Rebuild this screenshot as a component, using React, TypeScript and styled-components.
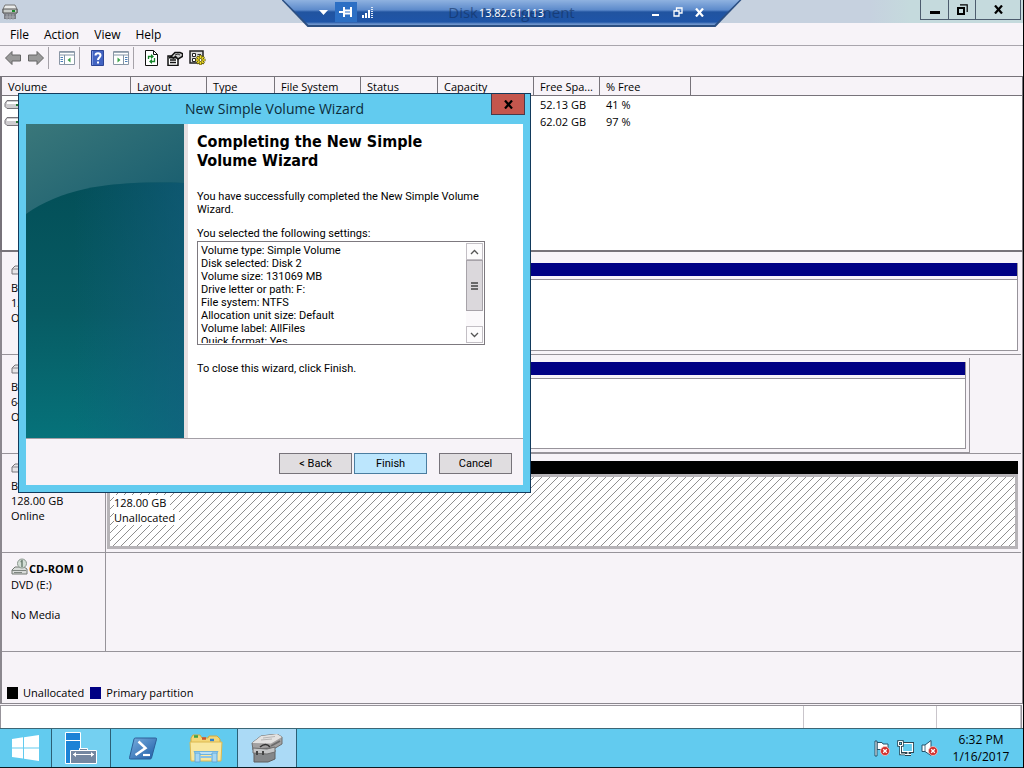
import React from "react";
import styled, { createGlobalStyle, css } from "styled-components";

const UI = '"Open Sans", "Noto Sans", sans-serif';
const DLG = 'Roboto, "Liberation Sans", Arial, sans-serif';

const Global = createGlobalStyle`
  * { box-sizing: border-box; }
  body { margin: 0; background: #f7f3f8; font-family: ${UI}; font-size: 12px; color: #000; }
  button, textarea { font: inherit; color: inherit; }
  svg { display: block; flex: none; }
`;

const Screen = styled.div`
  position: relative;
  display: flex;
  flex-direction: column;
  min-height: 100vh;
  border-right: 1px solid #000;
  overflow: hidden;
`;

/* ---------- window chrome ---------- */
const TitleBar = styled.header`
  position: relative;
  display: flex;
  align-items: flex-start;
  justify-content: space-between;
  height: 23px;
  padding: 0 2px;
  background: linear-gradient(90deg, #c6d1df 0 85%, #c5dadd 89%);
`;
const AppIcon = styled.div`
  padding-top: 4px;
`;
const WindowButtons = styled.div`
  display: flex;
`;
const WindowButton = styled.button<{ $w: number }>`
  display: flex;
  align-items: center;
  justify-content: center;
  width: ${(p) => p.$w}px;
  height: 20px;
  padding: 0;
  border: 1px solid #4d5c6e;
  border-width: 0 0 1px 1px;
  background: #c5dadd;
  &:last-child { border-right-width: 1px; }
`;
const RemoteBar = styled.div`
  position: absolute;
  top: 0;
  left: 50%;
  width: 460px;
  height: 27px;
  transform: translateX(-50%);
  clip-path: polygon(0 0, 100% 0, 434px 100%, 26px 100%);
  background: #2c4f82;
`;
const RemoteBarFace = styled.div`
  display: flex;
  align-items: center;
  height: 25px;
  padding: 0 31px 1px;
  clip-path: polygon(2px 0, 458px 0, 433px 100%, 27px 100%);
  background: linear-gradient(#8fb2e0, #5c8acb 10px, #2154a0 12px, #1f55a8 22px, #6d93cb 24px);
  color: #fff;
`;
const AppTitle = styled.h1`
  position: absolute;
  inset: 0;
  margin: 0;
  font-size: 15px;
  font-weight: 400;
  line-height: 24px;
  text-align: center;
  color: #12305f;
  opacity: 0.6;
`;
const RemoteAddress = styled.span`
  position: relative;
  flex: 1;
  font-size: 11px;
  text-align: center;
`;
const RemoteButton = styled.button<{ $on?: boolean }>`
  position: relative;
  display: flex;
  align-items: center;
  justify-content: center;
  width: 22px;
  height: 20px;
  padding: 0;
  border: 0;
  background: ${(p) => (p.$on ? "#2c6fc4" : "transparent")};
`;

const MenuBar = styled.nav`
  display: flex;
  gap: 15px;
  height: 23px;
  padding: 0 10px;
  border-bottom: 1px solid #a9a5ad;
`;
const MenuItem = styled.button`
  padding: 0;
  border: 0;
  background: none;
  line-height: 21px;
`;
const ToolBar = styled.div`
  display: flex;
  align-items: center;
  height: 30px;
  padding: 0 1px 6px;
`;
const ToolButton = styled.button`
  display: flex;
  align-items: center;
  justify-content: center;
  width: 23px;
  height: 22px;
  padding: 0;
  border: 0;
  background: none;
`;
const Separator = styled.span`
  width: 1px;
  height: 22px;
  margin: 0 6px 0 1px;
  background: #a6a2a9;
`;

/* ---------- volume list ---------- */
const VolumePane = styled.section`
  height: 176px;
  border: 1px solid #77737a;
  border-left-width: 2px;
  border-bottom: 2px solid #77737a;
  background: #fff;
  font-size: 11px;
`;
const VolumeTable = styled.table`
  width: 100%;
  border-collapse: separate;
  border-spacing: 0;
  table-layout: fixed;
  th {
    height: 19px;
    padding: 2px 0 0 6px;
    border-right: 1px solid #77737a;
    border-bottom: 1px solid #77737a;
    background: #f7f3f8;
    font-size: 11px;
    font-weight: 400;
    line-height: 16px;
    text-align: left;
    white-space: nowrap;
  }
  th:last-child { border-right: 0; }
  td {
    height: 17px;
    padding: 0 0 0 6px;
    line-height: 17px;
    white-space: nowrap;
  }
  td:first-child { padding-left: 2px; }
`;

/* ---------- disk map ---------- */
const DiskPane = styled.main`
  flex: 1;
  display: flex;
  flex-direction: column;
  border: 1px solid #8b878e;
  border-width: 0 1px 1px 2px;
`;
const DiskList = styled.div`
  flex: 1;
  padding-top: 4px;
`;
const DiskRow = styled.div`
  display: flex;
  height: 99px;
  margin-right: 1px;
`;
const DiskInfo = styled.div`
  display: flex;
  flex-direction: column;
  width: 104px;
  padding: 8px 0 0 9px;
  border-right: 1px solid #97939a;
  border-bottom: 1px solid #97939a;
  font-size: 11px;
  line-height: 15px;
  white-space: pre;
`;
const DiskName = styled.strong`
  display: flex;
  align-items: flex-start;
  height: 16px;
  svg { margin: -3px 1px 0 0; }
`;
const DiskMap = styled.div`
  flex: 1;
  display: flex;
  padding: 3px 3px 0 0;
  border-bottom: 1px solid #97939a;
`;
const Partition = styled.div<{ $framed?: boolean }>`
  flex: 1;
  display: flex;
  padding: 4px 0 3px 1px;
  ${(p) =>
    p.$framed &&
    css`
      flex: none;
      width: calc(100% - 48px);
      padding-right: 3px;
      border-right: 1px solid #97939a;
      border-bottom: 1px solid #97939a;
    `}
`;
const PartitionBox = styled.div<{ $plain?: boolean }>`
  flex: 1;
  display: flex;
  flex-direction: column;
  border: 0 solid #97939a;
  border-width: ${(p) => (p.$plain ? "0" : "0 1px 1px 0")};
`;
const PartitionColor = styled.div<{ $c: string }>`
  height: 13px;
  background: ${(p) => p.$c};
`;
const PartitionBody = styled.div`
  flex: 1;
  margin-top: 3px;
  border: 1px solid #97939a;
  border-width: 1px 0 0 1px;
  background: #fff;
`;

const hatchCells = Array.from({ length: 8 }, (_, i) => `M${7 - i} ${i}h1v1h-1z`).join("");
const hatch = `url("data:image/svg+xml,${encodeURIComponent(
  `<svg xmlns="http://www.w3.org/2000/svg" width="8" height="8" shape-rendering="crispEdges"><path fill="#8f8f8f" d="${hatchCells}"/></svg>`
)}")`;

const FreeSpace = styled.div`
  flex: 1;
  display: flex;
  flex-direction: column;
  align-items: flex-start;
  padding: 18px 0 0 4px;
  border: 3px solid #b7b4b8;
  background: #fff ${hatch};
  font-size: 11px;
  line-height: 15px;
  span { padding: 0 4px 0 0; background: #fff; }
`;
const Legend = styled.div`
  display: flex;
  align-items: center;
  gap: 6px;
  height: 21px;
  padding: 0 5px;
  font-size: 11px;
`;
const LegendItem = styled.span`
  display: flex;
  align-items: center;
  gap: 5px;
`;
const Swatch = styled.span<{ $c: string }>`
  width: 11px;
  height: 12px;
  background: ${(p) => p.$c};
`;
const StatusBar = styled.footer`
  display: flex;
  height: 23px;
  margin: 1px 1px 0 0;
  border: 1px solid #97939a;
  border-bottom: 0;
  background: #fff;
`;
const StatusCell = styled.span<{ $w?: number }>`
  flex: ${(p) => (p.$w ? "none" : 1)};
  width: ${(p) => p.$w ?? 0}px;
  border-right: 1px solid #c9c5cb;
`;

/* ---------- taskbar ---------- */
const TaskBar = styled.footer`
  display: flex;
  align-items: stretch;
  height: 40px;
  border-top: 1px solid #3d6675;
  border-bottom: 1px solid #0b1a20;
  background: #62cbef;
`;
const TaskButton = styled.button<{ $w: number; $tone?: string }>`
  display: flex;
  align-items: center;
  justify-content: center;
  width: ${(p) => p.$w}px;
  padding: 0;
  border: 0;
  background: ${(p) => p.$tone ?? "transparent"};
  ${(p) => p.$tone && css`border-right: 1px solid #2b6076; border-left: 1px solid #2b6076;`}
`;
const Tray = styled.div`
  display: flex;
  align-items: center;
  gap: 6px;
  margin-left: auto;
`;
const Clock = styled.time`
  width: 78px;
  padding-right: 6px;
  font-size: 12px;
  line-height: 17px;
  text-align: center;
  white-space: pre-line;
`;

/* ---------- wizard ---------- */
const Dialog = styled.section`
  position: absolute;
  top: 93px;
  left: 18px;
  width: 513px;
  padding: 0 7px 7px;
  border: 1px solid #123a5c;
  background: #62cbef;
  font-family: ${DLG};
  font-size: 11px;
  line-height: 13px;
`;
const DialogTitle = styled.header`
  position: relative;
  height: 30px;
  font-family: ${UI};
  font-size: 14px;
  line-height: 29px;
  text-align: center;
  color: #0d2b3a;
`;
const DialogClose = styled.button`
  position: absolute;
  top: 0;
  right: -2px;
  display: flex;
  align-items: center;
  justify-content: center;
  width: 34px;
  height: 21px;
  padding: 0;
  border: 1px solid #4a3a4a;
  border-top: 0;
  background: #c4564d;
`;
const DialogBody = styled.div`
  display: flex;
  height: 315px;
  border-bottom: 1px solid #a39fa6;
  background: #fff;
`;
const Banner = styled.div`
  width: 162px;
  border-right: 4px solid #e6e0e1;
`;
const Page = styled.div`
  flex: 1;
  padding: 8px 38px 0 9px;
`;
const Heading = styled.h2`
  margin: 0 0 20px;
  font-family: "DejaVu Sans Condensed", "DejaVu Sans", sans-serif;
  font-size: 16px;
  font-weight: 700;
  line-height: 19px;
  color: #000;
`;
const Text = styled.p<{ $gap?: number }>`
  margin: 0 0 ${(p) => p.$gap ?? 0}px;
`;
const SettingsLabel = styled.label`
  display: block;
  margin-bottom: 1px;
`;
const SettingsBox = styled.div`
  display: flex;
  height: 104px;
  margin-bottom: 17px;
  padding: 1px;
  border: 1px solid #7d797f;
`;
const Settings = styled.textarea`
  flex: 1;
  height: 100px;
  min-width: 0;
  margin: 0;
  padding: 1px 2px;
  border: 0;
  outline: 0;
  background: #fff;
  line-height: 13px;
  resize: none;
  overflow: hidden;
`;
const ScrollBar = styled.div`
  display: flex;
  flex-direction: column;
  width: 17px;
  background: #fbf9fb;
`;
const ScrollArrow = styled.button`
  display: flex;
  align-items: center;
  justify-content: center;
  height: 17px;
  padding: 0;
  border: 1px solid #c3bfc5;
  background: #fdfcfd;
`;
const Thumb = styled.div`
  display: flex;
  align-items: center;
  justify-content: center;
  height: 51px;
  margin-bottom: auto;
  border: 1px solid #a7a3a9;
  background: #dbd8dc;
`;
const Actions = styled.div`
  display: flex;
  justify-content: flex-end;
  gap: 2px;
  height: 46px;
  padding: 14px 11px 0 0;
  background: #f7f3f8;
`;
const PushButton = styled.button<{ $primary?: boolean; $apart?: boolean }>`
  width: 73px;
  height: 21px;
  margin-left: ${(p) => (p.$apart ? 10 : 0)}px;
  padding: 0;
  border: 1px solid ${(p) => (p.$primary ? "#4b7da0" : "#77737a")};
  background: ${(p) => (p.$primary ? "#bce6fd" : "#e0dde0")};
  font-size: 11px;
`;

/* ---------- drawings ---------- */
const SmallDisk = () => (
  <svg width="16" height="17" viewBox="0 0 16 17">
    <path d="M3 1h10l2 4v4H1V5z" fill="#e9ebea" stroke="#777" />
    <path d="M1 5h14v4H1z" fill="#c9cdca" stroke="#555" />
    <path d="M10 7h3" stroke="#1d8b2e" strokeWidth="2" />
    <path d="M2 10h12v5H2z" fill="#7c7f86" />
    <path d="M3 13h10M5 10v6M8 10v6M11 10v6" stroke="#a9acb2" />
  </svg>
);
const VolumeIcon = () => (
  <svg width="18" height="9" viewBox="0 0 18 9">
    <path d="M3 .5h12l2 3v3l-2 2H3l-2-2v-3z" fill="#cfcdd0" stroke="#77747a" />
    <path d="M3 3h11" stroke="#fff" strokeWidth="2" />
    <path d="M12 5h3" stroke="#297a35" strokeWidth="2" />
  </svg>
);
const DiskIcon = () => (
  <svg width="17" height="16" viewBox="0 0 17 16">
    <path d="M1 8l3-3h10l2 3v5H1z" fill="#e6e4e7" stroke="#77747a" />
    <path d="M1 8h15" stroke="#8a878d" />
  </svg>
);
const CdIcon = () => (
  <svg width="17" height="17" viewBox="0 0 17 17">
    <path d="M1 12l3-3h9l3 2v5H1z" fill="#d9dcda" stroke="#727873" />
    <circle cx="11" cy="5.500" r="4.500" fill="#d3ded6" stroke="#8a968e" />
    <path d="M11 2v7M9.500 3.500H11" stroke="#6d8073" strokeWidth="1.500" fill="none" />
    <path d="M1 12.500h14M3 14.500h8" stroke="#7e8580" />
  </svg>
);
const Arrow = ({ flip }: { flip?: boolean }) => (
  <svg width="18" height="16" viewBox="0 0 18 16">
    <path
      d="M1.500 8L8 1.500V5h8.500v6H8v3.500z"
      fill="#999"
      stroke="#666"
      transform={flip ? "matrix(-1 0 0 1 18 0)" : undefined}
    />
  </svg>
);
const PaneIcon = ({ right }: { right?: boolean }) => (
  <svg width="16" height="14" viewBox="0 0 16 14">
    <path d="M.5.5h15v13H.5z" fill="#fff" stroke="#8a96a5" />
    <path d="M1 1.500h14" stroke="#9eabb9" />
    <path d="M1 4h14" stroke="#8293a6" />
    {right ? (
      <>
        <path d="M10.500 4v9" stroke="#8293a6" />
        <path d="M12 6.500h2.500M12 8.500h2.500M12 10.500h2.500" stroke="#4b7fb8" />
        <path d="M4.500 6.500l3 2.500-3 2.500z" fill="#3ca349" />
      </>
    ) : (
      <>
        <path d="M5.500 4v9" stroke="#8293a6" />
        <path d="M1.500 6.500H4M1.500 8.500H4M1.500 10.500H4" stroke="#4b7fb8" />
        <path d="M11.500 6.500l-3 2.500 3 2.500z" fill="#3ca349" />
      </>
    )}
  </svg>
);
const HelpIcon = () => (
  <svg width="13" height="16" viewBox="0 0 13 16">
    <path d="M.5.5h12v15H.5z" fill="#4263c2" stroke="#2c4596" />
    <path d="M1.500 1v14" stroke="#7e98e0" />
    <path d="M4.500 5.500C4.500 2.500 9.500 2.500 9.500 5.500 9.500 7.500 7 7.500 7 10M7 11.500v2" fill="none" stroke="#fff" strokeWidth="2" />
  </svg>
);
const RefreshIcon = () => (
  <svg width="13" height="16" viewBox="0 0 13 16">
    <path d="M.5.5h8l4 4v11H.5z" fill="#fff" stroke="#111" />
    <path d="M8.500.5v4h4" fill="none" stroke="#111" />
    <path d="M3.500 9V6.500H7M9.500 8v3.500H6" fill="none" stroke="#16862a" strokeWidth="1.300" />
    <path d="M6 4l3 2.500L6 9zM7 9l-3 2.500L7 14z" fill="#16862a" />
  </svg>
);
const PropertiesIcon = () => (
  <svg width="16" height="15" viewBox="0 0 16 15">
    <path d="M1 5h10v9.500H1z" fill="#fff" stroke="#111" strokeWidth="1.500" />
    <path d="M3 9h6M3 11.500h6" stroke="#111" strokeWidth="1.500" />
    <path d="M2 6.500h8" stroke="#111" strokeWidth="2" />
    <path d="M4 5.500L8 1.500h5l2.500 1v3L11 8 8.500 5.500l-2 1.500z" fill="#ccc" stroke="#111" strokeWidth="1.500" />
    <path d="M8 4l3-1 2 1" fill="none" stroke="#333" />
  </svg>
);
const SettingsIcon = () => (
  <svg width="17" height="16" viewBox="0 0 17 16">
    <path d="M1 1h13v12H1z" fill="#ddd" stroke="#222" strokeWidth="1.500" />
    <path d="M3.500 3.500h3v3h-3zM3.500 8.500h3v3h-3z" fill="#fff" stroke="#222" />
    <path d="M8.500 4.500H12M8.500 7H12" stroke="#333" />
    <path d="M11.500 5v10M6.500 10h10M8 6.500l7 7M15 6.500l-7 7" stroke="#5b5200" strokeWidth="2.500" />
    <path d="M11.500 5.500v9M7 10h9M8.500 7l6 6M14.500 7l-6 6" stroke="#f0dd2a" strokeWidth="1.500" />
    <circle cx="11.500" cy="10" r="1.500" fill="#fff" stroke="#5b5200" />
  </svg>
);
const MinGlyph = () => (
  <svg width="12" height="10" viewBox="0 0 12 10">
    <path d="M1 7.500h10" stroke="#000" strokeWidth="3" />
  </svg>
);
const MinSmall = () => (
  <svg width="8" height="8" viewBox="0 0 8 8">
    <path d="M0 7h7" stroke="#fff" strokeWidth="2" />
  </svg>
);
const RestoreGlyph = () => (
  <svg width="11" height="11" viewBox="0 0 11 11">
    <path d="M1 4h6v6H1z" fill="none" stroke="#000" strokeWidth="2" />
    <path d="M3 .8h7.200V8" fill="none" stroke="#000" strokeWidth="1.200" />
  </svg>
);
const CloseGlyph = ({ c = "#000", s = 9 }: { c?: string; s?: number }) => (
  <svg width={s} height={s} viewBox="0 0 9 9">
    <path d="M1 .5l7 8M8 .5l-7 8" stroke={c} strokeWidth="2.200" />
  </svg>
);
const Chevron = ({ down }: { down?: boolean }) => (
  <svg width="9" height="6" viewBox="0 0 9 6">
    <path d={down ? "M1 1l3.500 3.500L8 1" : "M1 5l3.500-3.500L8 5"} fill="none" stroke="#555" strokeWidth="1.300" />
  </svg>
);
const WindowsLogo = () => (
  <svg width="28" height="26" viewBox="0 0 28 26">
    <path d="M0 4l11-1.700V12.500H0zM12 2.200L27 0v12.500H12zM0 13.500h11v10L0 22zM12 13.500h15V26l-15-2.300z" fill="#fff" />
  </svg>
);
const ServerManager = () => (
  <svg width="32" height="32" viewBox="0 0 32 32">
    <path d="M.5.5h15v31H.5z" fill="#1c82d6" stroke="#fff" />
    <path d="M0 8.500h16" stroke="#fff" />
    <path d="M14.500 18.500v-2h8v2" fill="#7487a1" stroke="#fff" />
    <path d="M5.500 18.500h26v13h-26z" fill="#7487a1" stroke="#fff" />
    <path d="M8 22.500h21" stroke="#fff" />
    <path d="M11 20l-3 2.500 3 2.500zM26 20l3 2.500-3 2.500z" fill="#fff" />
  </svg>
);
const PowerShell = () => (
  <svg width="28" height="23" viewBox="0 0 28 23">
    <defs>
      <linearGradient id="ps" x1="0" y1="0" x2="1" y2="1">
        <stop offset="0" stopColor="#79aede" />
        <stop offset="1" stopColor="#1d5ca6" />
      </linearGradient>
    </defs>
    <path d="M6.500 1h20a1 1 0 0 1 1 1.300l-5 18.700a1.500 1.500 0 0 1-1.500 1H1.500a1 1 0 0 1-1-1.300L5 2A1.500 1.500 0 0 1 6.500 1z" fill="url(#ps)" stroke="#2d5f98" />
    <path d="M9.500 4.500l7 6.500-10 7" fill="none" stroke="#fff" strokeWidth="2.500" />
    <path d="M14 18h7" stroke="#fff" strokeWidth="2.200" />
  </svg>
);
const Explorer = () => (
  <svg width="34" height="29" viewBox="0 0 34 29">
    <path d="M2 4l2-3h7l2 3h6l1-2h8l3 3v21H2z" fill="#f3d778" stroke="#d1aa3e" />
    <path d="M5 2.500h4" stroke="#3da046" strokeWidth="2.500" />
    <path d="M13 4.500h4" stroke="#c9532f" strokeWidth="2.500" />
    <path d="M21 6h4" stroke="#2f83cf" strokeWidth="2.500" />
    <path d="M1 8h32l-1 19H2z" fill="#f9e79f" stroke="#dcb951" />
    <path d="M5 17.500h24l-2 3H7z" fill="#b9e0f5" stroke="#6fb2dc" />
    <path d="M6 19h5v9H6zM23 19h5v9h-5z" fill="#a5d6f3" stroke="#5fa9da" />
    <path d="M11 23h12" stroke="#8cc4e6" strokeWidth="2" />
  </svg>
);
const DiskMgmt = () => (
  <svg width="32" height="29" viewBox="0 0 32 29">
    <path d="M1 9L10 2l16-2 5 3v7l-10 6H2z" fill="#a3a1a1" stroke="#6e6e6e" />
    <path d="M1 9L10 2l16-2 5 3-11 6.500z" fill="#e3e2e1" />
    <path d="M12 4l12-1.500M10 6l11-1" stroke="#b5b5b5" />
    <path d="M20 12l9-5" stroke="#6c6c6c" strokeWidth="2" />
    <path d="M9 13q6-5 10 0" fill="none" stroke="#333" strokeWidth="1.500" />
    <path d="M3 15l17-1 4 2v9l-7 3H3z" fill="#858789" stroke="#5f5f5f" />
    <path d="M2 14l14 1 8-2v5l-8 2-14-1z" fill="#c4c5c6" stroke="#6e6e6e" />
    <path d="M6 17v4M12 17v4" stroke="#444" strokeWidth="2" />
  </svg>
);
const ErrorDot = () => (
  <>
    <circle cx="12" cy="11" r="4.500" fill="#d2302c" stroke="#f2c9c7" strokeWidth=".8" />
    <path d="M10.200 9.200l3.600 3.600M13.800 9.200l-3.600 3.600" stroke="#fff" strokeWidth="1.300" />
  </>
);
const FlagIcon = () => (
  <svg width="18" height="17" viewBox="0 0 18 17">
    <path d="M4 2.500h5l1 1.500h5v7h-5L9 9.500H4z" fill="#fff" stroke="#27536a" />
    <path d="M2 1h2v15H2z" fill="#fff" stroke="#27536a" />
    <ErrorDot />
  </svg>
);
const NetworkIcon = () => (
  <svg width="18" height="17" viewBox="0 0 18 17">
    <path d="M5.500 3.500h10v8h-10zM8 14.500h6M11 12v2" fill="none" stroke="#2d4450" strokeWidth="3" />
    <path d="M5.500 3.500h10v8h-10zM8 14.500h6M11 12v2" fill="#62cbef" stroke="#fff" strokeWidth="1.200" />
    <path d="M1.500 1.500h4v4h-4zM3.500 6v8H8" fill="none" stroke="#2d4450" strokeWidth="2.500" />
    <path d="M1.500 1.500h4v4h-4zM3.500 6v8H8" fill="none" stroke="#fff" />
  </svg>
);
const SoundIcon = () => (
  <svg width="18" height="17" viewBox="0 0 18 17">
    <path d="M1 5h3l6-4.500v15L4 11.500H1z" fill="#fff" stroke="#27536a" />
    <path d="M4 5v6.500" stroke="#27536a" strokeWidth=".8" />
    <ErrorDot />
  </svg>
);

const columns: [string, number?][] = [
  ["Volume", 129], ["Layout", 76], ["Type", 68], ["File System", 86], ["Status", 77],
  ["Capacity", 96], ["Free Spa...", 66], ["% Free", 91], [""],
];
const volumes = [
  { free: "52.13 GB", pct: "41 %" },
  { free: "62.02 GB", pct: "97 %" },
];
const settings = [
  "Volume type: Simple Volume", "Disk selected: Disk 2", "Volume size: 131069 MB",
  "Drive letter or path: F:", "File system: NTFS", "Allocation unit size: Default",
  "Volume label: AllFiles", "Quick format: Yes",
].join("\n");

function Info({ name, lines, cd }: { name: string; lines: string[]; cd?: boolean }) {
  return (
    <DiskInfo>
      <DiskName>{cd ? <CdIcon /> : <DiskIcon />}{name}</DiskName>
      {lines.map((l, i) => <span key={i}>{l || " "}</span>)}
    </DiskInfo>
  );
}

function PrimaryPartition({ framed }: { framed?: boolean }) {
  return (
    <Partition $framed={framed}>
      <PartitionBox>
        <PartitionColor $c="#000084" />
        <PartitionBody />
      </PartitionBox>
    </Partition>
  );
}

function Wizard() {
  return (
    <Dialog role="dialog" aria-label="New Simple Volume Wizard">
      <DialogTitle>
        New Simple Volume Wizard
        <DialogClose aria-label="Close"><CloseGlyph /></DialogClose>
      </DialogTitle>
      <DialogBody>
        <Banner>
          <svg width="158" height="314" viewBox="0 0 158 314">
            <defs>
              <linearGradient id="sky" x1="0" y1="0" x2="1" y2="1">
                <stop offset="0" stopColor="#3a777a" />
                <stop offset="1" stopColor="#145a6e" />
              </linearGradient>
              <linearGradient id="hill" x1="0" y1="0" x2="0" y2="1">
                <stop offset="0" stopColor="#034f58" />
                <stop offset=".5" stopColor="#075b63" />
                <stop offset="1" stopColor="#06727a" />
              </linearGradient>
              <linearGradient id="side" x1="0" y1="0" x2="1" y2="0">
                <stop offset=".3" stopColor="#155d80" stopOpacity="0" />
                <stop offset="1" stopColor="#155d80" stopOpacity=".6" />
              </linearGradient>
            </defs>
            <path d="M0 0h158v100H0z" fill="url(#sky)" />
            <path d="M0 90C40 62 90 57 158 59V314H0z" fill="url(#hill)" />
            <path d="M0 90C40 62 90 57 158 59V314H0z" fill="url(#side)" />
          </svg>
        </Banner>
        <Page>
          <Heading>Completing the New Simple<br />Volume Wizard</Heading>
          <Text $gap={11}>You have successfully completed the New Simple Volume<br />Wizard.</Text>
          <SettingsLabel htmlFor="settings">You selected the following settings:</SettingsLabel>
          <SettingsBox>
            <Settings id="settings" readOnly value={settings} />
            <ScrollBar>
              <ScrollArrow aria-label="Scroll up"><Chevron /></ScrollArrow>
              <Thumb>
                <svg width="7" height="8" viewBox="0 0 7 8">
                  <path d="M0 1h7M0 4h7M0 7h7" stroke="#444" strokeWidth="1.500" />
                </svg>
              </Thumb>
              <ScrollArrow aria-label="Scroll down"><Chevron down /></ScrollArrow>
            </ScrollBar>
          </SettingsBox>
          <Text>To close this wizard, click Finish.</Text>
        </Page>
      </DialogBody>
      <Actions>
        <PushButton>&lt; Back</PushButton>
        <PushButton $primary>Finish</PushButton>
        <PushButton $apart>Cancel</PushButton>
      </Actions>
    </Dialog>
  );
}

export default function App() {
  return (
    <Screen>
      <Global />
      <TitleBar>
        <AppIcon><SmallDisk /></AppIcon>
        <WindowButtons>
          <WindowButton $w={28} aria-label="Minimize"><MinGlyph /></WindowButton>
          <WindowButton $w={27} aria-label="Restore"><RestoreGlyph /></WindowButton>
          <WindowButton $w={46} aria-label="Close"><CloseGlyph /></WindowButton>
        </WindowButtons>
        <RemoteBar>
          <RemoteBarFace>
            <AppTitle>Disk Management</AppTitle>
            <RemoteButton aria-label="Menu">
              <svg width="9" height="5" viewBox="0 0 9 5"><path d="M0 0h9L4.500 5z" fill="#fff" /></svg>
            </RemoteButton>
            <RemoteButton $on aria-label="Pin">
              <svg width="13" height="10" viewBox="0 0 13 10">
                <path d="M0 5h4M5 0v10M12 0v10" stroke="#fff" strokeWidth="2" />
                <path d="M6 3.500h5M6 6.500h5" stroke="#fff" strokeWidth="2" />
              </svg>
            </RemoteButton>
            <RemoteButton aria-label="Connection quality">
              <svg width="12" height="12" viewBox="0 0 12 12">
                <path d="M1 9v3M4 7v5M7 4v8" stroke="#fff" strokeWidth="2" />
                <path d="M10 1v11" stroke="#dfe9f7" strokeWidth="2" strokeDasharray="1 1" />
              </svg>
            </RemoteButton>
            <RemoteAddress>13.82.61.113</RemoteAddress>
            <RemoteButton aria-label="Minimize session"><MinSmall /></RemoteButton>
            <RemoteButton aria-label="Restore session">
              <svg width="10" height="10" viewBox="0 0 10 10">
                <path d="M1 4h5v5H1zM3.500 3.500V1H9v5H6.500" fill="none" stroke="#fff" strokeWidth="1.300" />
              </svg>
            </RemoteButton>
            <RemoteButton aria-label="Close session"><CloseGlyph c="#fff" /></RemoteButton>
          </RemoteBarFace>
        </RemoteBar>
      </TitleBar>
      <MenuBar>
        {["File", "Action", "View", "Help"].map((m) => <MenuItem key={m}>{m}</MenuItem>)}
      </MenuBar>
      <ToolBar>
        <ToolButton aria-label="Back"><Arrow /></ToolButton>
        <ToolButton aria-label="Forward"><Arrow flip /></ToolButton>
        <Separator />
        <ToolButton aria-label="Console tree"><PaneIcon /></ToolButton>
        <Separator />
        <ToolButton aria-label="Help"><HelpIcon /></ToolButton>
        <ToolButton aria-label="Action pane"><PaneIcon right /></ToolButton>
        <Separator />
        <ToolButton aria-label="Refresh"><RefreshIcon /></ToolButton>
        <ToolButton aria-label="Properties"><PropertiesIcon /></ToolButton>
        <ToolButton aria-label="Settings"><SettingsIcon /></ToolButton>
      </ToolBar>
      <VolumePane>
        <VolumeTable>
          <colgroup>
            {columns.map(([n, w], i) => <col key={n || i} width={w} />)}
          </colgroup>
          <thead>
            <tr>{columns.map(([n], i) => <th key={i}>{n}</th>)}</tr>
          </thead>
          <tbody>
            {volumes.map((v) => (
              <tr key={v.free}>
                <td><VolumeIcon /></td>
                <td colSpan={5} />
                <td>{v.free}</td>
                <td>{v.pct}</td>
                <td />
              </tr>
            ))}
          </tbody>
        </VolumeTable>
      </VolumePane>
      <DiskPane>
        <DiskList>
          <DiskRow>
            <Info name="Disk 0" lines={["Basic", "127.00 GB", "Online"]} />
            <DiskMap><PrimaryPartition /></DiskMap>
          </DiskRow>
          <DiskRow>
            <Info name="Disk 1" lines={["Basic", "64.00 GB", "Online"]} />
            <DiskMap><PrimaryPartition framed /></DiskMap>
          </DiskRow>
          <DiskRow>
            <Info name="Disk 2" lines={["Basic", "128.00 GB", "Online"]} />
            <DiskMap>
              <Partition>
                <PartitionBox $plain>
                  <PartitionColor $c="#000" />
                  <FreeSpace><span>128.00 GB</span><span>Unallocated</span></FreeSpace>
                </PartitionBox>
              </Partition>
            </DiskMap>
          </DiskRow>
          <DiskRow>
            <Info cd name="CD-ROM 0" lines={["DVD (E:)", "", "No Media"]} />
            <DiskMap />
          </DiskRow>
        </DiskList>
        <Legend>
          <LegendItem><Swatch $c="#000" />Unallocated</LegendItem>
          <LegendItem><Swatch $c="#000084" />Primary partition</LegendItem>
        </Legend>
      </DiskPane>
      <StatusBar>
        <StatusCell />
        <StatusCell $w={133} />
        <StatusCell $w={84} />
      </StatusBar>
      <TaskBar>
        <TaskButton $w={51} aria-label="Start"><WindowsLogo /></TaskButton>
        <TaskButton $w={60} $tone="#74d0f1" aria-label="Server Manager"><ServerManager /></TaskButton>
        <TaskButton $w={64} aria-label="PowerShell"><PowerShell /></TaskButton>
        <TaskButton $w={62} aria-label="File Explorer"><Explorer /></TaskButton>
        <TaskButton $w={60} $tone="#abdaf6" aria-label="Disk Management"><DiskMgmt /></TaskButton>
        <Tray>
          <FlagIcon /><NetworkIcon /><SoundIcon />
          <Clock>{"6:32 PM\n1/16/2017"}</Clock>
        </Tray>
      </TaskBar>
      <Wizard />
    </Screen>
  );
}
